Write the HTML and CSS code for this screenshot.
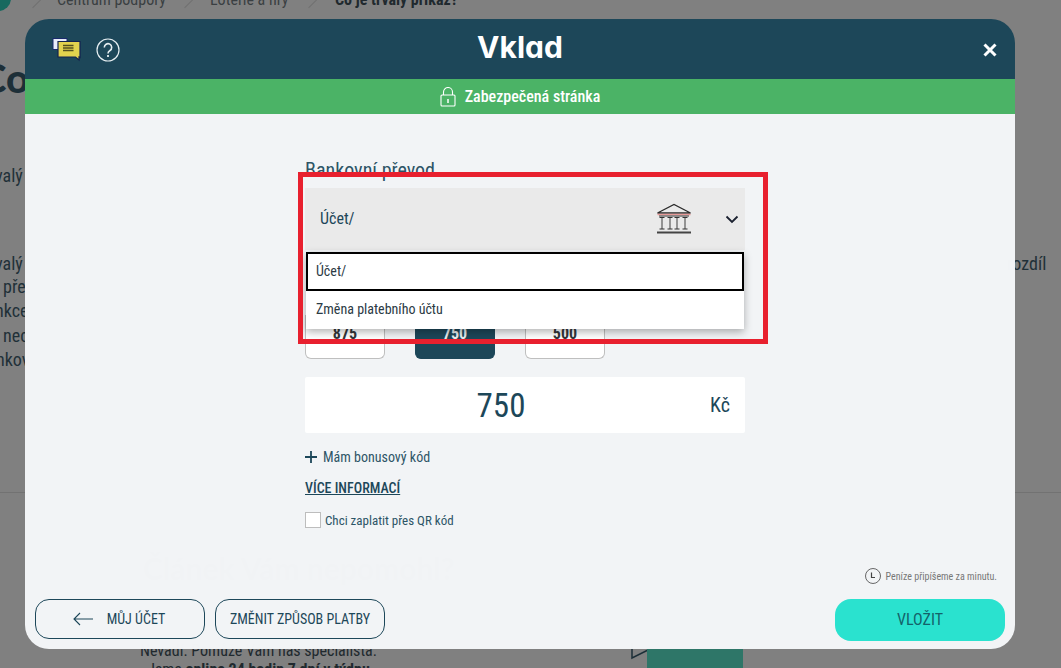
FILE: index.html
```html
<!DOCTYPE html>
<html lang="cs">

<head>
  <meta name="viewport" content="width=device-width, initial-scale=1.0">
  <meta charset="utf-8">
  <title>Vklad</title>

  <link rel="stylesheet" href="styles.css">
</head>

<body>
  <div class="page">
    <div class="crumbs">
      <span class="crumb-logo"></span>
      <span class="crumb-slash slash-first"></span>
      <span class="crumb crumb-first">Centrum podpory</span>
      <span class="crumb-slash slash-second"></span>
      <span class="crumb crumb-second">Loterie a hry</span>
      <span class="crumb-slash slash-third"></span>
      <b class="crumb crumb-third">Co je trvalý příkaz?</b>
    </div>
    <h1 class="page-title">Co je trvalý příkaz?</h1>
    <div class="page-text">
      <p class="line-a">valý</p>
      <p class="line-b">valý</p>
      <p class="line-c">pře</p>
      <p class="line-d">nkce</p>
      <p class="line-e">nec</p>
      <p class="line-f">nkov</p>
    </div>
    <p class="page-right">rozdíl</p>
    <hr class="page-line">
    <div class="page-help">
      <h2 class="help-title">Článek Vám nepomohl?</h2>
      <p class="help-text">Nevadí. Pomůže Vám náš specialista.<br>Jsme <b>online 24 hodin 7 dní v týdnu</b></p>
      <div class="help-chat">
        <svg class="help-tail" width="20" height="20" viewBox="0 0 20 20"><path d="M2 3v15l16-8" fill="none" stroke="#1d2f38" stroke-width="1.5"/></svg>
        <span class="help-box"></span>
      </div>
    </div>
  </div>

  <div class="modal">
    <div class="modal-head">
      <div class="head-icons">
        <svg width="29" height="24" viewBox="0 0 29 24">
          <path d="M1 .500h14v11H1z" fill="#e8ecfa" stroke="#1a2a6c"/>
          <path d="M6 3.500h22v16l-1-.5V22l-3.500-3H6z" fill="#e2d24e" stroke="#14224f" stroke-width="1.200"/>
          <path d="M11 7.500h10.500M11 10h10.500M11 12.500h10.500" stroke="#55501f" stroke-width="1.400"/>
        </svg>
        <svg width="24" height="24" viewBox="0 0 24 24" fill="none" stroke="#e4edf0">
          <circle cx="12" cy="12" r="11" stroke-width="1.200"/>
          <path d="M8.300 9.400a3.700 3.700 0 1 1 5.700 3.100c-1.300.8-2 1.500-2 3" stroke-width="1.600"/>
          <path d="M12 17v2" stroke-width="1.800"/>
        </svg>
      </div>
      <h1 class="modal-title">Vklad</h1>
      <svg class="head-close" width="16" height="16" viewBox="0 0 16 16"><path d="M2.500 2.500l11 11M13.500 2.500l-11 11" stroke="#fff" stroke-width="3"/></svg>
    </div>
    <div class="modal-secure">
      <svg width="18" height="20" viewBox="0 0 18 20" fill="none" stroke="#fff" stroke-width="1.100">
        <rect x="2" y="8" width="14" height="11" rx="1"/>
        <path d="M4.500 8V5a4.500 4.500 0 0 1 9 0v3"/>
        <path d="M9 12v4" stroke-width="1.500"/>
      </svg>
      <span>Zabezpečená stránka</span>
    </div>

    <div class="modal-body">
      <div class="form">
        <div class="form-label">Bankovní převod</div>
        <div class="select">
          <span class="select-value">Účet/</span>
          <svg class="select-bank" width="36" height="32" viewBox="0 0 36 32" fill="none">
            <path d="M1.500 10L18 1.500 34.500 10z" stroke="#2b2b2b" stroke-width="1.300"/>
            <path d="M1.500 11.500h33" stroke="#e79a98" stroke-width="1.500"/>
            <path d="M3 13h30" stroke="#333" stroke-width="1"/>
            <path d="M6 14v12M14 14v12M21 14v12M29 14v12" stroke="#777" stroke-width="1.500"/>
            <path d="M3.500 14.500h5M11.500 14.500h5M18.500 14.500h5M26.500 14.500h5M3.500 26h5M11.500 26h5M18.500 26h5M26.500 26h5" stroke="#333" stroke-width="1.200"/>
            <path d="M1 29.500h34" stroke="#444" stroke-width="2"/>
          </svg>
          <svg class="select-arrow" width="14" height="9" viewBox="0 0 14 9" fill="none"><path d="M1.500 1.500L7 7l5.500-5.500" stroke="#1b2130" stroke-width="1.800"/></svg>
        </div>
        <div class="amounts">
          <div class="amount">875</div>
          <div class="amount amount-active">750</div>
          <div class="amount">500</div>
        </div>
        <div class="sum">
          <span class="sum-value">750</span>
          <span class="sum-unit">Kč</span>
        </div>
        <div class="bonus">
          <svg width="12" height="12" viewBox="0 0 12 12"><path d="M6 0v12M0 6h12" stroke="#1d4759" stroke-width="1.800"/></svg>
          <span>Mám bonusový kód</span>
        </div>
        <a class="more">VÍCE INFORMACÍ</a>
        <label class="qr"><span class="qr-box"></span>Chci zaplatit přes QR kód</label>

        <div class="dropdown">
          <div class="option option-focus">Účet/</div>
          <div class="option">Změna platebního účtu</div>
        </div>
      </div>

      <div class="note">
        <svg width="16" height="16" viewBox="0 0 16 16" fill="none" stroke="#444">
          <circle cx="8" cy="8" r="7.500" stroke-width=".8"/>
          <path d="M6.500 4.500v5h3.500" stroke-width="1.200"/>
        </svg>
        <span>Peníze připíšeme za minutu.</span>
      </div>

      <div class="actions">
        <button class="btn btn-back">
          <svg width="20" height="14" viewBox="0 0 20 14" fill="none" stroke="#1d4759" stroke-width="1.100"><path d="M7 1L1 7l6 6M1 7h19"/></svg>
          MŮJ ÚČET
        </button>
        <button class="btn btn-change">ZMĚNIT ZPŮSOB PLATBY</button>
        <button class="btn-submit">VLOŽIT</button>
      </div>
    </div>
  </div>

  <div class="highlight"></div>
</body>

</html>
```

FILE: styles.css
```css
* {
  box-sizing: border-box;
}

html,
body {
  margin: 0;
  padding: 0;
  height: 100%;
  overflow: hidden;
}

body {
  background: #808080;
  font-family: "Roboto", "Liberation Sans", sans-serif;
  font-stretch: 75%;
  color: #1d4759;
}

p,
h1,
h2 {
  margin: 0;
}

/* page behind the overlay */
.page {
  position: absolute;
  inset: 0;
  overflow: hidden;
  color: #1f3038;
  white-space: nowrap;
}

.crumbs {
  position: relative;
  height: 10px;
  font-size: 16px;
  color: #3a3f42;
}

.crumb {
  position: absolute;
  top: -9px;
  line-height: 18px;
}

.crumb-first { left: 57px; }
.crumb-second { left: 210px; }
.crumb-third { left: 335px; color: #20292e; }

.crumb-slash {
  position: absolute;
  top: -4px;
  width: 1px;
  height: 14px;
  background: #707070;
  transform: rotate(45deg);
}

.slash-first { left: 37px; }
.slash-second { left: 189px; }
.slash-third { left: 313px; }

.crumb-logo {
  position: absolute;
  left: -14px;
  top: -14px;
  width: 25px;
  height: 25px;
  border-radius: 50%;
  background: #17695f;
}

.page-title {
  position: absolute;
  left: -20px;
  top: 54px;
  font-family: "Lato", sans-serif;
  font-size: 40px;
  font-weight: 900;
  line-height: 48px;
  color: #1d2f38;
}

.page-text p {
  position: absolute;
  font-size: 18px;
  line-height: 24px;
}

.line-a { left: -5px; top: 164px; }
.line-b { left: -5px; top: 252px; }
.line-c { left: 3px; top: 275px; }
.line-d { left: -5px; top: 299px; }
.line-e { left: 3px; top: 324px; }
.line-f { left: -4px; top: 348px; }

.page-right {
  position: absolute;
  left: 1007px;
  top: 252px;
  font-size: 18px;
  line-height: 24px;
}

.page-line {
  position: absolute;
  left: 0;
  right: 0;
  top: 492px;
  margin: 0;
  border: 0;
  border-top: 1px solid #727272;
}

.help-title {
  position: absolute;
  left: 143px;
  top: 550px;
  font-family: "Lato", sans-serif;
  font-size: 30px;
  line-height: 36px;
}

.help-text {
  position: absolute;
  left: 140px;
  top: 641px;
  font-size: 16px;
  line-height: 19px;
  text-align: center;
  color: #20292e;
}

.help-chat {
  position: absolute;
  left: 630px;
  top: 640px;
  display: flex;
}

.help-box {
  width: 96px;
  height: 40px;
  margin: 9px 0 0 -3px;
  background: #2e7668;
}

/* deposit dialog */
.modal {
  position: absolute;
  left: 25px;
  top: 19px;
  width: 990px;
  height: 630px;
  display: flex;
  flex-direction: column;
  border-radius: 24px;
  overflow: hidden;
}

.modal-head {
  position: relative;
  flex: none;
  height: 60px;
  display: flex;
  align-items: center;
  justify-content: center;
  background: #1d4759;
}

.head-icons {
  position: absolute;
  left: 27px;
  top: 19px;
  display: flex;
  align-items: center;
  gap: 15px;
}

.modal-title {
  font-family: "Inter", sans-serif;
  font-stretch: normal;
  font-feature-settings: "cv11";
  font-size: 30px;
  font-weight: 700;
  line-height: 56px;
  margin: -4px 0 0 0;
  color: #fff;
}

.head-close {
  position: absolute;
  right: 17px;
  top: 23px;
}

.modal-secure {
  flex: none;
  height: 35px;
  display: flex;
  align-items: center;
  justify-content: center;
  gap: 8px;
  padding-right: 1px;
  background: #4bb366;
  color: #fff;
  font-size: 16px;
  font-weight: 500;
}

.modal-body {
  position: relative;
  flex: 1;
  display: flex;
  flex-direction: column;
  background: rgba(243, 245, 247, .994);
}

.form {
  position: relative;
  width: 440px;
  margin: 46px 0 0 280px;
}

.form-label {
  font-size: 20px;
  line-height: 20px;
  color: #2d5566;
  height: 28px;
}

.select {
  display: flex;
  align-items: center;
  height: 62px;
  padding: 0 6px 0 15px;
  background: #eaeaea;
}

.select-value {
  flex: 1;
  font-size: 16px;
  margin-top: -2px;
}

.select-bank {
  margin-right: 33px;
}

.amounts {
  display: flex;
  gap: 30px;
  height: 109px;
  margin-bottom: 18px;
  padding-top: 65px;
}

.amount {
  width: 80px;
  height: 44px;
  padding-top: 10px;
  border: 1px solid #bfbfbf;
  border-top: 0;
  border-radius: 0 0 6px 6px;
  background: #fff;
  text-align: center;
  font-size: 16px;
  font-weight: 700;
  line-height: 18px;
  color: #33363a;
}

.amount-active {
  background: #1d4759;
  border-color: #1d4759;
  color: #e8eef0;
}

.sum {
  position: relative;
  height: 56px;
  display: flex;
  align-items: center;
  justify-content: center;
  background: #fff;
  border-radius: 2px;
}

.sum-value {
  font-size: 33px;
  font-weight: 400;
  margin-left: -48px;
}

.sum-unit {
  position: absolute;
  right: 15px;
  top: 16px;
  font-size: 20px;
  line-height: 24px;
}

.bonus {
  display: flex;
  align-items: center;
  gap: 6px;
  margin-top: 15px;
  height: 18px;
  font-size: 14px;
  color: #2d5566;
}

.more {
  display: block;
  margin-top: 14px;
  font-size: 14px;
  line-height: 16px;
  font-weight: 500;
  text-decoration: underline;
}

.qr {
  display: flex;
  align-items: center;
  gap: 4px;
  margin-top: 16px;
  font-size: 13px;
  color: #2d5566;
}

.qr-box {
  width: 16px;
  height: 16px;
  border: 1px solid #bdbdbd;
  background: #fff;
}

.dropdown {
  position: absolute;
  left: 1px;
  top: 92px;
  width: 438px;
  height: 77px;
  background: #fff;
  box-shadow: 0 3px 8px rgba(0, 0, 0, .3);
}

.option {
  height: 38px;
  padding: 0 10px;
  line-height: 36px;
  font-size: 14px;
  color: #2b3a44;
}

.option-focus {
  height: 39px;
  padding: 0 8px;
  border: 2px solid #000;
  line-height: 35px;
}

.note {
  position: absolute;
  right: 18px;
  top: 454px;
  display: flex;
  align-items: center;
  gap: 5px;
  font-size: 10px;
  color: #777;
}

.actions {
  position: absolute;
  left: 10px;
  right: 10px;
  bottom: 8px;
  height: 42px;
  display: flex;
  align-items: flex-start;
  gap: 10px;
}

.btn {
  display: flex;
  align-items: center;
  justify-content: center;
  gap: 14px;
  width: 170px;
  height: 40px;
  padding: 0;
  border: 1px solid #1d4759;
  border-radius: 14px;
  background: transparent;
  font-family: inherit;
  font-stretch: inherit;
  font-size: 14px;
  color: #1d4759;
}

.btn-back {
  padding-right: 2px;
}

.btn-submit {
  width: 170px;
  height: 42px;
  margin-left: auto;
  padding: 0 0 2px;
  border: 0;
  border-radius: 16px;
  background: #2ae2cf;
  font-family: inherit;
  font-stretch: inherit;
  font-size: 16px;
  color: #14626a;
}

/* red marker put over the screenshot */
.highlight {
  position: absolute;
  left: 298px;
  top: 172px;
  width: 470px;
  height: 172px;
  border: 5px solid #e8202e;
}
```
